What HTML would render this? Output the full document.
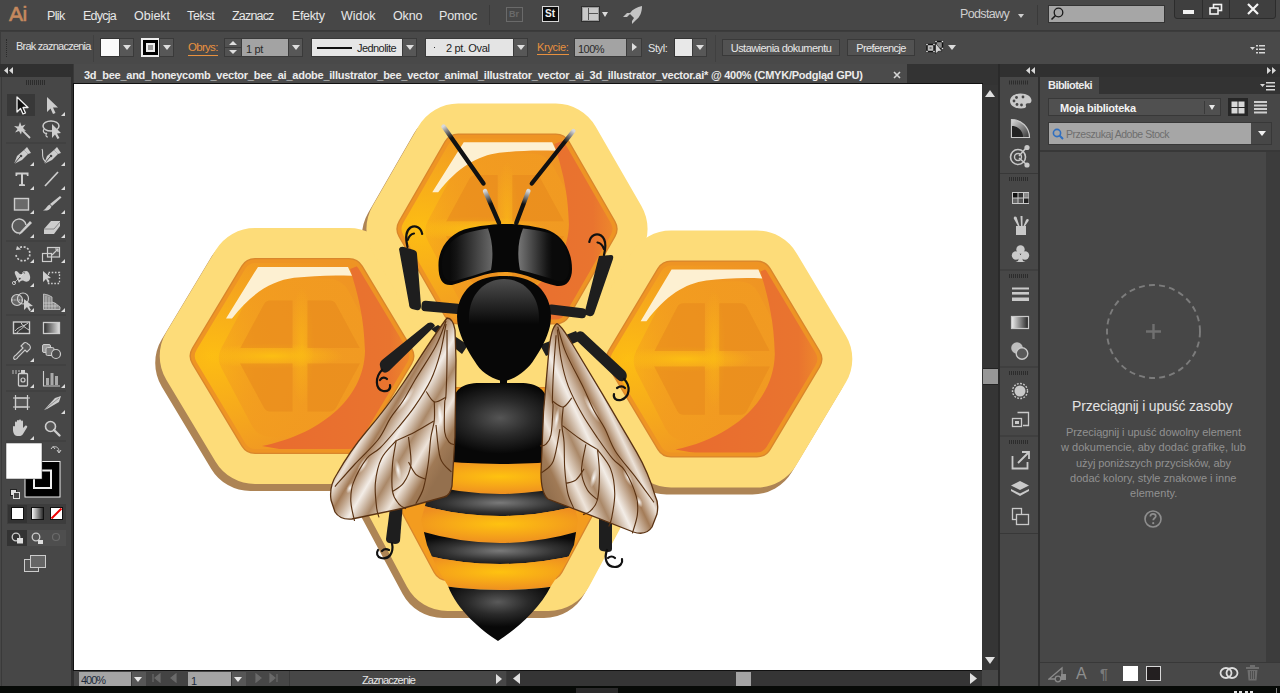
<!DOCTYPE html>
<html><head><meta charset="utf-8">
<style>
*{margin:0;padding:0;box-sizing:border-box}
html,body{width:1280px;height:693px;overflow:hidden;background:#474747;font-family:"Liberation Sans",sans-serif;position:relative}
.a{position:absolute}
.t{position:absolute;white-space:nowrap;line-height:1}
#menubar{left:0;top:0;width:1280px;height:31px;background:#474747;border-bottom:1px solid #393939}
.mi{position:absolute;top:8.5px;font-size:12.5px;color:#e8e8e8;letter-spacing:-0.2px}
#ctrl{left:0;top:31px;width:1280px;height:33px;background:#494949;border-top:1px solid #3c3c3c;border-left:1px solid #3c3c3c}
.ct{position:absolute;font-size:11px;color:#e4e4e4;white-space:nowrap;line-height:1}
.dd{position:absolute;width:15px;height:17px;background:#575757;border:1px solid #3a3a3a}
.dd:after{content:"";position:absolute;left:3px;top:6px;border-left:4px solid transparent;border-right:4px solid transparent;border-top:5px solid #dedede}
.fld{position:absolute;height:17px;background:#a3a3a3;border:1px solid #3a3a3a;font-size:11px;line-height:1;color:#2a2a2a;padding:3px 0 0 3px;white-space:nowrap}
.pbtn{position:absolute;height:17px;background:#525252;border:1px solid #393939;font-size:11px;line-height:1;color:#e8e8e8;text-align:center;padding-top:3px;white-space:nowrap}
</style></head><body>
<!-- MENU BAR -->
<div id="menubar" class="a">
  <div class="t" style="left:9px;top:3px;font-size:21px;color:#c5895e;-webkit-text-stroke:0.6px #c5895e;letter-spacing:-0.6px">Ai</div>
  <div class="mi" style="left:47px;letter-spacing:-0.66px">Plik</div>
  <div class="mi" style="left:83px;letter-spacing:-0.76px">Edycja</div>
  <div class="mi" style="left:134px;letter-spacing:-0.02px">Obiekt</div>
  <div class="mi" style="left:187px;letter-spacing:-0.34px">Tekst</div>
  <div class="mi" style="left:232px;letter-spacing:-0.82px">Zaznacz</div>
  <div class="mi" style="left:292px;letter-spacing:-0.37px">Efekty</div>
  <div class="mi" style="left:341px;letter-spacing:-0.05px">Widok</div>
  <div class="mi" style="left:393px;letter-spacing:-0.10px">Okno</div>
  <div class="mi" style="left:439px;letter-spacing:-0.18px">Pomoc</div>
  <div class="a" style="left:489px;top:5px;width:1px;height:20px;background:#3a3a3a"></div>
  <!-- Br -->
  <div class="a" style="left:506px;top:7px;width:17px;height:15px;border:1px solid #6a6a6a"></div>
  <div class="t" style="left:509px;top:10px;font-size:9px;font-weight:bold;color:#6a6a6a">Br</div>
  <!-- St -->
  <div class="a" style="left:542px;top:6px;width:17px;height:16px;border:1px solid #d8d8d8;background:#0c0c0c"></div>
  <div class="t" style="left:545px;top:9px;font-size:10px;font-weight:bold;color:#f0f0f0">St</div>
  <!-- layout -->
  <div class="a" style="left:581px;top:6px;width:19px;height:16px;border:1px solid #2e2e2e;background:#c8c8c8;box-shadow:inset 0 0 0 1px #9a9a9a"></div>
  <div class="a" style="left:588px;top:8px;width:1px;height:12px;background:#555"></div>
  <div class="a" style="left:589px;top:13px;width:9px;height:1px;background:#555"></div>
  <div class="a" style="left:602px;top:12px;border-left:3.5px solid transparent;border-right:3.5px solid transparent;border-top:5px solid #dcdcdc"></div>
  <!-- rocket -->
  <svg class="a" style="left:622px;top:5px" width="22" height="20" viewBox="0 0 22 20">
    <path d="M20 1 C15 2 11 4 8 8 L5 8 L1 12 L5 12 L8 9 L12 13 L10 16 L10 19 L14 15 C18 12 20 7 20 1Z" fill="#c4c4c4"/>
  </svg>
  <!-- right -->
  <div class="t" style="left:960px;top:8px;font-size:12.5px;color:#cfcfcf;letter-spacing:-0.65px">Podstawy</div>
  <div class="a" style="left:1018px;top:14px;border-left:3.5px solid transparent;border-right:3.5px solid transparent;border-top:4px solid #cfcfcf"></div>
  <div class="a" style="left:1037px;top:5px;width:1px;height:20px;background:#3a3a3a"></div>
  <div class="a" style="left:1048px;top:5px;width:117px;height:18px;background:#a6a6a6;border:1px solid #333"></div>
  <svg class="a" style="left:1050px;top:6px" width="14" height="16" viewBox="0 0 14 16"><circle cx="8.5" cy="6.5" r="4.3" fill="none" stroke="#1a1a1a" stroke-width="1.3"/><path d="M5.5 9.5 L1.5 13.5" stroke="#1a1a1a" stroke-width="1.6"/></svg>
  <!-- window buttons -->
  <div class="a" style="left:1174px;top:-1px;width:102px;height:20px;background:#3f3f3f;border:1px solid #2c2c2c;border-radius:0 0 3px 3px"></div>
  <div class="a" style="left:1202px;top:0;width:1px;height:18px;background:#2c2c2c"></div>
  <div class="a" style="left:1229px;top:0;width:1px;height:18px;background:#2c2c2c"></div>
  <div class="a" style="left:1183px;top:10px;width:11px;height:4px;background:#f2f2f2"></div>
  <svg class="a" style="left:1209px;top:3px" width="14" height="13" viewBox="0 0 14 13"><rect x="4.5" y="1.5" width="8" height="6" fill="none" stroke="#f2f2f2" stroke-width="1.6"/><rect x="1" y="5" width="8" height="6" fill="#3f3f3f" stroke="#f2f2f2" stroke-width="1.6"/></svg>
  <svg class="a" style="left:1246px;top:3px" width="14" height="12" viewBox="0 0 14 12"><path d="M2 1 L12 11 M12 1 L2 11" stroke="#f4f4f4" stroke-width="2.2"/></svg>
</div>
<!-- CONTROL BAR -->
<div id="ctrl" class="a">
  <div class="a" style="left:5px;top:7px;width:1px;height:18px;border-left:1px dotted #2a2a2a"></div>
  <div class="ct" style="left:15px;top:9px;letter-spacing:-0.76px">Brak zaznaczenia</div>
  <div class="a" style="left:92px;top:3px;width:1px;height:27px;background:#404040"></div>
  <div class="a" style="left:99px;top:6px;width:20px;height:19px;background:#fafafa;border:1px solid #333"></div>
  <div class="dd" style="left:118px;top:6px;height:19px"></div>
  <div class="a" style="left:140px;top:6px;width:19px;height:19px;background:#000;border:2px solid #eee"></div>
  <div class="a" style="left:145px;top:11px;width:9px;height:9px;background:#999;border:2px solid #eee"></div>
  <div class="dd" style="left:158px;top:6px;height:19px"></div>
  <div class="ct" style="left:187px;top:10px;color:#e8913f;font-size:11.5px;border-bottom:1px solid #e8913f;padding-bottom:1px;letter-spacing:-0.70px">Obrys:</div>
  <div class="a" style="left:223px;top:6px;width:18px;height:19px;background:#525252;border:1px solid #393939"></div>
  <div class="a" style="left:228px;top:9px;border-left:4px solid transparent;border-right:4px solid transparent;border-bottom:4px solid #dedede"></div>
  <div class="a" style="left:228px;top:18px;border-left:4px solid transparent;border-right:4px solid transparent;border-top:4px solid #dedede"></div>
  <div class="a" style="left:224px;top:15px;width:16px;height:1px;background:#3a3a3a"></div>
  <div class="fld" style="left:240px;top:6px;width:48px;height:19px;padding-top:5px;padding-left:4px;letter-spacing:-0.31px">1 pt</div>
  <div class="dd" style="left:287px;top:6px;height:19px"></div>
  <div class="a" style="left:310px;top:6px;width:92px;height:19px;background:#e6e6e6;border:1px solid #393939"></div>
  <div class="a" style="left:316px;top:15px;width:35px;height:2px;background:#111"></div>
  <div class="ct" style="left:356px;top:11px;color:#1e1e1e;letter-spacing:-0.56px">Jednolite</div>
  <div class="dd" style="left:401px;top:6px;height:19px"></div>
  <div class="a" style="left:424px;top:6px;width:89px;height:19px;background:#e4e4e4;border:1px solid #393939"></div>
  <div class="a" style="left:433px;top:15px;width:1px;height:1px;background:#333"></div>
  <div class="ct" style="left:445px;top:11px;color:#1e1e1e;letter-spacing:-0.36px">2 pt. Oval</div>
  <div class="dd" style="left:512px;top:6px;height:19px"></div>
  <div class="ct" style="left:536px;top:10px;color:#e8913f;font-size:11px;border-bottom:1px solid #e8913f;padding-bottom:1px;letter-spacing:-0.30px">Krycie:</div>
  <div class="fld" style="left:573px;top:6px;width:53px;height:19px;padding-top:5px;padding-left:3px;letter-spacing:-0.54px">100%</div>
  <div class="a" style="left:625px;top:6px;width:16px;height:19px;background:#575757;border:1px solid #3a3a3a"></div>
  <div class="a" style="left:631px;top:11px;border-top:4px solid transparent;border-bottom:4px solid transparent;border-left:5px solid #dedede"></div>
  <div class="ct" style="left:647px;top:11px;letter-spacing:-0.42px">Styl:</div>
  <div class="a" style="left:673px;top:6px;width:19px;height:19px;background:#e8e8e8;border:1px solid #333"></div>
  <div class="dd" style="left:691px;top:6px;height:19px"></div>
  <div class="a" style="left:714px;top:3px;width:1px;height:27px;background:#404040"></div>
  <div class="pbtn" style="left:721px;top:7px;width:118px;height:17px;letter-spacing:-0.54px">Ustawienia dokumentu</div>
  <div class="pbtn" style="left:846px;top:7px;width:68px;height:17px;letter-spacing:-0.61px">Preferencje</div>
  <svg class="a" style="left:924px;top:8px" width="20" height="17" viewBox="924 39 20 17">
    <rect x="926" y="43.5" width="7" height="7" fill="#bdbdbd" stroke="#111" stroke-width="1.4"/>
    <rect x="928.5" y="46" width="2" height="2" fill="#777"/>
    <rect x="935" y="40.5" width="6.5" height="7" fill="#8a8a8a" stroke="#111" stroke-width="1.4"/>
    <g fill="#e6e6e6" stroke="#111" stroke-width="0.5"><circle cx="926" cy="43.5" r="1.1"/><circle cx="933" cy="43.5" r="1.1"/><circle cx="926" cy="50.5" r="1.1"/><circle cx="933" cy="50.5" r="1.1"/><circle cx="935" cy="40.5" r="1.1"/><circle cx="941.5" cy="40.5" r="1.1"/><circle cx="941.5" cy="47.5" r="1.1"/></g>
    <path d="M934.5 42 L934.5 53 L937 50.5 L941 50 Z" fill="#d4d4d4" stroke="#111" stroke-width="0.6"/>
  </svg>
  <div class="a" style="left:947px;top:13px;border-left:4px solid transparent;border-right:4px solid transparent;border-top:5px solid #dcdcdc"></div>
  <svg class="a" style="left:1249px;top:12px" width="16" height="10" viewBox="0 0 16 10">
    <path d="M0 3 L5 3 L2.5 6Z" fill="#d8d8d8"/><rect x="6" y="1" width="2" height="1.5" fill="#d8d8d8"/><rect x="9" y="1" width="6" height="1.5" fill="#d8d8d8"/>
    <rect x="6" y="4.5" width="2" height="1.5" fill="#d8d8d8"/><rect x="9" y="4.5" width="6" height="1.5" fill="#d8d8d8"/>
    <rect x="6" y="8" width="2" height="1.5" fill="#d8d8d8"/><rect x="9" y="8" width="6" height="1.5" fill="#d8d8d8"/>
  </svg>
</div>

<!-- LEFT PANEL HEADER -->
<div class="a" style="left:0;top:64px;width:71px;height:13px;background:#303030"></div>
<svg class="a" style="left:4px;top:67px" width="10" height="7" viewBox="0 0 10 7"><path d="M4 0 L0 3.5 L4 7Z M9 0 L5 3.5 L9 7Z" fill="#d8d8d8"/></svg>
<!-- TOOLBAR -->
<div class="a" id="tools" style="left:1px;top:77px;width:70px;height:609px;background:#474747;border-left:1px solid #3a3a3a"></div>
<div class="a" style="left:71px;top:64px;width:3px;height:622px;background:#303030"></div>
<!-- TOOLBAR SVG --><svg class="a" style="left:0;top:64px" width="72" height="622" viewBox="0 64 72 622">
<defs><linearGradient id="tg" x1="0" y1="0" x2="1" y2="1"><stop offset="0" stop-color="#e8e8e8"/><stop offset="1" stop-color="#9a9a9a"/></linearGradient><linearGradient id="tgr" x1="0" y1="0" x2="1" y2="0"><stop offset="0" stop-color="#2a2a2a"/><stop offset="1" stop-color="#e0e0e0"/></linearGradient><linearGradient id="tgr2" x1="0" y1="0" x2="1" y2="0"><stop offset="0" stop-color="#fff"/><stop offset="1" stop-color="#222"/></linearGradient></defs>
<rect x="26" y="80" width="1" height="5" fill="#2c2c2c"/>
<rect x="28" y="80" width="1" height="5" fill="#2c2c2c"/>
<rect x="30" y="80" width="1" height="5" fill="#2c2c2c"/>
<rect x="32" y="80" width="1" height="5" fill="#2c2c2c"/>
<rect x="34" y="80" width="1" height="5" fill="#2c2c2c"/>
<rect x="36" y="80" width="1" height="5" fill="#2c2c2c"/>
<rect x="38" y="80" width="1" height="5" fill="#2c2c2c"/>
<rect x="40" y="80" width="1" height="5" fill="#2c2c2c"/>
<rect x="42" y="80" width="1" height="5" fill="#2c2c2c"/>
<rect x="44" y="80" width="1" height="5" fill="#2c2c2c"/>
<rect x="7" y="94" width="28" height="22" fill="#383838"/>
<rect x="6" y="142.5" width="60" height="1" fill="#3d3d3d"/>
<rect x="6" y="240.5" width="60" height="1" fill="#3d3d3d"/>
<rect x="6" y="314.5" width="60" height="1" fill="#3d3d3d"/>
<rect x="6" y="364.5" width="60" height="1" fill="#3d3d3d"/>
<rect x="6" y="390.5" width="60" height="1" fill="#3d3d3d"/>
<rect x="6" y="440.5" width="60" height="1" fill="#3d3d3d"/>
<path d="M17 97 L17 112 L20.5 108.5 L23 114 L25.5 113 L23 107.5 L28 107.5 Z" fill="#111" stroke="#f0f0f0" stroke-width="1.3" stroke-linejoin="round"/>
<path d="M47 97 L47 112 L50.5 108.5 L53 114 L55.5 113 L53 107.5 L58 107.5 Z" fill="#cdcdcd"/>
<path d="M65 116 L61 116 L65 112 Z" fill="#dcdcdc"/>
<path d="M20 122 L21.5 126 L25.5 124.5 L23 128 L26 131 L22 130.5 L21 134.5 L19 131 L15 132.5 L17.5 129 L14 126 L18.5 126.5 Z" fill="#cdcdcd"/>
<path d="M21 129 L30 138" stroke="#cdcdcd" stroke-width="1.8"/>
<ellipse cx="51" cy="126" rx="8" ry="5" fill="none" stroke="#cdcdcd" stroke-width="1.5"/>
<path d="M52 124 L52 138 L55 134.5 L57.5 139 L59.5 138 L57 133.5 L61 133 Z" fill="#cdcdcd"/>
<path d="M44 129 C42 132 45 134 47 133 C45 135 46 137 48 137" fill="none" stroke="#cdcdcd" stroke-width="1.1"/>
<path d="M14 164 L17 156 L24 150 L28 154 L22 160 Z" fill="#cdcdcd"/>
<path d="M24 150 L27 147 L31 153 L28 154 Z" fill="#cdcdcd"/>
<path d="M14 164 L20 157" stroke="#474747" stroke-width="1"/>
<circle cx="21" cy="156" r="1.3" fill="#474747"/>
<path d="M34 166 L30 166 L34 162 Z" fill="#dcdcdc"/>
<path d="M44 164 L47 156 L54 150 L58 154 L52 160 Z" fill="#cdcdcd"/>
<path d="M54 150 L57 147 L61 153 L58 154 Z" fill="#cdcdcd"/>
<path d="M44 164 L50 157" stroke="#474747" stroke-width="1"/>
<circle cx="51" cy="156" r="1.3" fill="#474747"/>
<path d="M46 162 C40 158 44 152 42 149" fill="none" stroke="#cdcdcd" stroke-width="1.1"/>
<path d="M65 166 L61 166 L65 162 Z" fill="#dcdcdc"/>
<path d="M15.5 172.5 L28.5 172.5 L28.5 176 L27 176 L26.5 174.5 L23 174.5 L23 184 L25 184.5 L25 186 L19 186 L19 184.5 L21 184 L21 174.5 L17.5 174.5 L17 176 L15.5 176 Z" fill="#cdcdcd"/>
<path d="M34 190 L30 190 L34 186 Z" fill="#dcdcdc"/>
<path d="M45 186 L58 172" stroke="#cdcdcd" stroke-width="1.7"/>
<path d="M65 190 L61 190 L65 186 Z" fill="#dcdcdc"/>
<rect x="14.5" y="198.5" width="14" height="11.5" fill="#6a6a6a" stroke="#cdcdcd" stroke-width="1.4"/>
<path d="M34 214 L30 214 L34 210 Z" fill="#dcdcdc"/>
<path d="M60 196 L61.5 197.5 L52 206 L50 204 Z" fill="#cdcdcd"/><path d="M49.5 204.5 L51.5 206.5 C50 210 47 211 43 210.5 C46 209 47 206 49.5 204.5Z" fill="#cdcdcd"/>
<path d="M65 214 L61 214 L65 210 Z" fill="#dcdcdc"/>
<path d="M20 233 A7 7 0 1 1 26 225" fill="#5a5a5a" stroke="#cdcdcd" stroke-width="1.4"/>
<path d="M30 221 L32 223 L22 233 L19 235 L20 232 Z" fill="#cdcdcd"/>
<path d="M34 238 L30 238 L34 234 Z" fill="#dcdcdc"/>
<path d="M51 221 L60 221 L60 226 L54 234 L44 234 L44 229 Z" fill="#cdcdcd"/><path d="M44 229 L54 229 L60 222" fill="none" stroke="#777" stroke-width="0.8"/>
<path d="M65 238 L61 238 L65 234 Z" fill="#dcdcdc"/>
<path d="M16 255 A7 7 0 1 0 19 248" fill="none" stroke="#cdcdcd" stroke-width="1.7" stroke-dasharray="2 1.6"/>
<path d="M17 246 L21 249.5 L16 250 Z" fill="#cdcdcd"/>
<path d="M34 263 L30 263 L34 259 Z" fill="#dcdcdc"/>
<rect x="47.5" y="247.5" width="12" height="9.5" fill="#555" stroke="#cdcdcd" stroke-width="1.2"/><rect x="42.5" y="253.5" width="9" height="8" fill="none" stroke="#cdcdcd" stroke-width="1.2"/><path d="M52 255 L58 249 M55 249 L58 249 L58 252" fill="none" stroke="#cdcdcd" stroke-width="1.2"/>
<path d="M65 263 L61 263 L65 259 Z" fill="#dcdcdc"/>
<path d="M15 274 C14 271 16 270 18 272 C20 275 22 275 24 272 C26 270 29 271 30 276 C31 280 28 283 24 281 C22 280 20 281 19 283 Z" fill="#cdcdcd"/>
<circle cx="14" cy="283" r="1.6" fill="#474747" stroke="#ddd" stroke-width="0.8"/><circle cx="19.5" cy="278.5" r="1.6" fill="#474747" stroke="#ddd" stroke-width="0.8"/><circle cx="24" cy="273" r="1.3" fill="#474747" stroke="#ddd" stroke-width="0.8"/><path d="M14 283 L24 273" stroke="#eee" stroke-width="0.6"/>
<path d="M34 287 L30 287 L34 283 Z" fill="#dcdcdc"/>
<rect x="48.5" y="272.5" width="11" height="11" fill="none" stroke="#cdcdcd" stroke-width="1.3" stroke-dasharray="1.6 1.6"/>
<path d="M43 271 L43 282 L46 279 L48 283 L49.5 282 L47.5 278.5 L51 278 Z" fill="#cdcdcd"/>
<circle cx="17" cy="300" r="5.5" fill="#666" stroke="#cdcdcd" stroke-width="1.2"/><circle cx="23" cy="298.5" r="5.5" fill="none" stroke="#cdcdcd" stroke-width="1.2"/><path d="M12 300 L22 300" stroke="#cdcdcd" stroke-width="1" stroke-dasharray="1.3 1"/>
<path d="M24 299 L24 310 L27 307 L29.5 311 L31 310 L29 306.5 L33 306 Z" fill="#cdcdcd"/>
<path d="M34 312 L30 312 L34 308 Z" fill="#dcdcdc"/>
<path d="M43.5 294 L43.5 309.5 L60 309.5 L60 307 L55 303 L52 302 L52 297 L48 295 Z" fill="#888" stroke="#cdcdcd" stroke-width="0.8"/><path d="M46 296 V309 M49 297 V309 M43.5 303 H52 M52 302 V309 M55 303 V309 M43.5 306 H58" stroke="#ddd" stroke-width="0.6"/>
<path d="M65 312 L61 312 L65 308 Z" fill="#dcdcdc"/>
<rect x="13.5" y="322" width="16" height="11.5" fill="#3a3a3a" stroke="#cdcdcd" stroke-width="1.4"/><path d="M15 331 C19 326 23 327 28 323 M17 333 C19 329 22 330 25 325 M21 322.5 C22 326 26 328 29 330" fill="none" stroke="#cdcdcd" stroke-width="1"/>
<rect x="43.5" y="322.5" width="16" height="11" fill="url(#tgr)" stroke="#cdcdcd" stroke-width="1.3"/>
<path d="M28 344 C30 345 31 347 30 349 L27 352 L25 350 L18 357 C17 359 15 360 14 359 C13 358 14 356 16 355 L23 348 L21 346 L24 343 C25 342 27 343 28 344Z" fill="#555" stroke="#cdcdcd" stroke-width="1.1"/>
<path d="M34 362 L30 362 L34 358 Z" fill="#dcdcdc"/>
<rect x="42.5" y="344.5" width="8" height="8" rx="1.5" fill="#999" stroke="#cdcdcd" stroke-width="1"/><rect x="46" y="347.5" width="8" height="8" rx="1.5" fill="#777" stroke="#cdcdcd" stroke-width="1"/><circle cx="56" cy="354" r="4.5" fill="#4a4a4a" stroke="#cdcdcd" stroke-width="1.2"/>
<rect x="18.5" y="373.5" width="9" height="12.5" rx="1" fill="none" stroke="#cdcdcd" stroke-width="1.3"/><circle cx="23" cy="380" r="2" fill="none" stroke="#cdcdcd" stroke-width="1.2"/><rect x="21" y="370" width="4" height="3" fill="#cdcdcd"/>
<path d="M12 371 h2 M15 371 h2 M12 373 h2 M15 373 h2 M18 371 h2" stroke="#bbb" stroke-width="1"/>
<path d="M34 388 L30 388 L34 384 Z" fill="#dcdcdc"/>
<path d="M43.5 371 V386 H60" fill="none" stroke="#cdcdcd" stroke-width="1.1"/><rect x="46" y="378" width="3" height="7" fill="#aaa"/><rect x="50.5" y="373" width="3" height="12" fill="#aaa"/><rect x="55" y="376" width="3" height="9" fill="#aaa"/>
<path d="M65 388 L61 388 L65 384 Z" fill="#dcdcdc"/>
<rect x="15.5" y="398" width="12" height="9" fill="#555" stroke="#cdcdcd" stroke-width="1.2"/><path d="M13 398 H30 M13 407 H30 M15.5 395 V410 M27.5 395 V410" stroke="#cdcdcd" stroke-width="1.2"/>
<path d="M44 410 L55 398 L61 396 L59 402 L47 409 Z" fill="#cdcdcd"/><path d="M44 410 L59 398" stroke="#666" stroke-width="0.6"/>
<path d="M65 414 L61 414 L65 410 Z" fill="#dcdcdc"/>
<path d="M15 427 L15 422.5 C15 421 17 421 17 422.5 L17 426 L17 421 C17 419.5 19 419.5 19 421 L19 426 L19 420.5 C19 419 21 419 21 420.5 L21 426 L21 421.5 C21 420 23 420 23 421.5 L23 428 L25 426 C26 425 28 426 27 427.5 L23 434 C22 435.5 21 436 19 436 L17 436 C15 436 13 433 13 430 L13 427 C13 425.5 15 425.5 15 427Z" fill="#cdcdcd"/>
<path d="M34 440 L30 440 L34 436 Z" fill="#dcdcdc"/>
<circle cx="50.5" cy="426.5" r="5" fill="#555" stroke="#cdcdcd" stroke-width="1.6"/><path d="M54 430 L59.5 435.5" stroke="#cdcdcd" stroke-width="2.4" stroke-linecap="round"/>
<rect x="25" y="461.5" width="35" height="35.5" fill="#000" stroke="#eee" stroke-width="1"/>
<rect x="34" y="470.5" width="17" height="17.5" fill="none" stroke="#eee" stroke-width="2"/>
<rect x="6" y="443" width="36" height="36" fill="#fff" stroke="#333" stroke-width="0.5"/>
<path d="M53 447 C57 446 59 448 59 452 M51 449 L53 446.5 L55 449 M57 450 L59 453 L61 450" fill="none" stroke="#ccc" stroke-width="1"/>
<rect x="10.5" y="489.5" width="6" height="6" fill="#ddd" stroke="#222" stroke-width="1"/><rect x="13.5" y="492.5" width="6" height="6" fill="#444" stroke="#ddd" stroke-width="1"/>
<rect x="7" y="504" width="59" height="20" fill="#3d3d3d"/>
<rect x="8" y="505" width="19" height="18" fill="#333"/>
<rect x="11.5" y="507.5" width="12" height="12" fill="#fff" stroke="#111" stroke-width="1"/>
<rect x="31.5" y="507.5" width="12" height="12" fill="url(#tgr2)" stroke="#111" stroke-width="1"/>
<rect x="50.5" y="507.5" width="12" height="12" fill="#fff" stroke="#111" stroke-width="1"/><path d="M51.5 518.5 L61.5 508.5" stroke="#e00" stroke-width="2"/>
<rect x="7" y="530" width="59" height="16" fill="#4e4e4e"/><rect x="7" y="530" width="20" height="16" fill="#333"/>
<circle cx="16" cy="537" r="3.8" fill="none" stroke="#ccc" stroke-width="1.3"/><rect x="17" y="538" width="6" height="5.5" fill="#ddd"/>
<circle cx="36" cy="537" r="3.8" fill="#555" stroke="#ccc" stroke-width="1.3"/><rect x="38" y="540" width="5" height="4" fill="#ddd"/>
<circle cx="56" cy="537" r="3.5" fill="none" stroke="#6a6a6a" stroke-width="1.2"/>
<rect x="24.5" y="559.5" width="14" height="12" fill="#555" stroke="#ccc" stroke-width="1"/><rect x="30.5" y="555.5" width="15" height="12" fill="#666" stroke="#ccc" stroke-width="1"/>
</svg><!-- /TOOLBAR SVG -->
<!-- TAB BAR -->
<div class="a" style="left:74px;top:64px;width:924px;height:21px;background:#333333"></div>
<div class="a" style="left:73px;top:64px;width:834px;height:19px;background:#4b4b4b;border-left:1px solid #393939"></div>
<div class="t" style="left:84px;top:70px;font-size:11px;font-weight:bold;color:#ececec;letter-spacing:-0.25px">3d_bee_and_honeycomb_vector_bee_ai_adobe_illustrator_bee_vector_animal_illustrator_vector_ai_3d_illustrator_vector.ai* @ 400% (CMYK/Podgląd GPU)</div>
<svg class="a" style="left:893px;top:71px" width="8" height="8" viewBox="0 0 8 8"><path d="M1 1 L7 7 M7 1 L1 7" stroke="#d6d6d6" stroke-width="1.6"/></svg>
<div class="a" style="left:73px;top:83px;width:910px;height:1px;background:#111"></div>
<!-- CANVAS -->
<div class="a" id="canvas" style="left:74px;top:84px;width:908px;height:586px;background:#ffffff;overflow:hidden"><!-- ILLUS --><svg class="a" style="left:0;top:0" width="908" height="586" viewBox="74 84 908 586">
<defs>
<radialGradient id="gIn" gradientUnits="objectBoundingBox" cx="0.12" cy="0.5" r="0.9" fx="0.08" fy="0.5">
 <stop offset="0" stop-color="#fdbd13"/><stop offset="0.35" stop-color="#f6a91c"/><stop offset="0.6" stop-color="#f19a22"/><stop offset="1" stop-color="#ee9024"/></radialGradient>
<linearGradient id="gPlate" gradientUnits="objectBoundingBox" x1="0" y1="0" x2="1" y2="0">
 <stop offset="0" stop-color="#f19820" stop-opacity="0.35"/><stop offset="0.25" stop-color="#f29b20" stop-opacity="0.85"/><stop offset="1" stop-color="#f19a22" stop-opacity="1"/></linearGradient>
<radialGradient id="gGlow" gradientUnits="objectBoundingBox" cx="0.5" cy="0.5" r="0.5">
 <stop offset="0" stop-color="#fdc212" stop-opacity="0.9"/><stop offset="1" stop-color="#fdc212" stop-opacity="0"/></radialGradient>
<linearGradient id="gRed" gradientUnits="objectBoundingBox" x1="0" y1="0" x2="1" y2="0">
 <stop offset="0" stop-color="#e96b2f"/><stop offset="0.75" stop-color="#e9742f"/><stop offset="1" stop-color="#f29b28"/></linearGradient>
<linearGradient id="gBand" gradientUnits="objectBoundingBox" x1="0" y1="0" x2="1" y2="0">
 <stop offset="0" stop-color="#fdbf14"/><stop offset="0.6" stop-color="#f5a81f"/><stop offset="1" stop-color="#f09a22"/></linearGradient>
<radialGradient id="gYel" gradientUnits="objectBoundingBox" cx="0.5" cy="0.5" r="0.5">
 <stop offset="0" stop-color="#fec210"/><stop offset="0.5" stop-color="#f7a918"/><stop offset="1" stop-color="#ee8f20"/></radialGradient>
<radialGradient id="gBlk" gradientUnits="objectBoundingBox" cx="0.5" cy="0.6" r="0.5">
 <stop offset="0" stop-color="#7a7a7a"/><stop offset="0.55" stop-color="#333"/><stop offset="1" stop-color="#0a0a0a"/></radialGradient>
<radialGradient id="gBlk0" gradientUnits="userSpaceOnUse" cx="500" cy="418" r="65" gradientTransform="translate(500 418) scale(1 0.55) translate(-500 -418)">
 <stop offset="0" stop-color="#555"/><stop offset="0.5" stop-color="#2a2a2a"/><stop offset="1" stop-color="#070707"/></radialGradient>
<radialGradient id="gTip" gradientUnits="userSpaceOnUse" cx="498" cy="602" r="50" gradientTransform="translate(498 602) scale(1.2 0.5) translate(-498 -602)">
 <stop offset="0" stop-color="#5a5a5a"/><stop offset="0.5" stop-color="#2a2a2a"/><stop offset="1" stop-color="#080808"/></radialGradient>
<radialGradient id="gThx" gradientUnits="userSpaceOnUse" cx="504" cy="300" r="45" gradientTransform="translate(504 300) scale(1 0.55) translate(-504 -300)">
 <stop offset="0" stop-color="#4a4a4a"/><stop offset="0.6" stop-color="#262626"/><stop offset="1" stop-color="#080808"/></radialGradient>
<linearGradient id="gEyeL" gradientUnits="userSpaceOnUse" x1="450" y1="0" x2="494" y2="0">
 <stop offset="0" stop-color="#0a0a0a"/><stop offset="0.15" stop-color="#141414"/><stop offset="1" stop-color="#6c6c6c"/></linearGradient>
<linearGradient id="gEyeR" gradientUnits="userSpaceOnUse" x1="518" y1="0" x2="552" y2="0">
 <stop offset="0" stop-color="#777"/><stop offset="0.85" stop-color="#161616"/><stop offset="1" stop-color="#0a0a0a"/></linearGradient>
<radialGradient id="gAnt" gradientUnits="objectBoundingBox" cx="0.5" cy="0.5" r="0.5">
 <stop offset="0" stop-color="#fff"/><stop offset="1" stop-color="#fff" stop-opacity="0"/></radialGradient>
<linearGradient id="gWingL" gradientUnits="userSpaceOnUse" x1="452.6" y1="266" x2="534.4" y2="314.3">
 <stop offset="0" stop-color="#a88260"/><stop offset="0.1" stop-color="#ece2d8"/><stop offset="0.22" stop-color="#a47c58"/><stop offset="0.4" stop-color="#f3ede7"/><stop offset="0.56" stop-color="#aa8868"/><stop offset="0.72" stop-color="#eee4da"/><stop offset="0.88" stop-color="#a07a56"/><stop offset="1" stop-color="#94704e"/></linearGradient>
<linearGradient id="gWingR" gradientUnits="userSpaceOnUse" x1="257.6" y1="-121.7" x2="348" y2="-164.4">
 <stop offset="0" stop-color="#94704e"/><stop offset="0.12" stop-color="#a07a56"/><stop offset="0.28" stop-color="#eee4da"/><stop offset="0.44" stop-color="#aa8868"/><stop offset="0.6" stop-color="#f3ede7"/><stop offset="0.78" stop-color="#a47c58"/><stop offset="0.9" stop-color="#ece2d8"/><stop offset="1" stop-color="#a88260"/></linearGradient>
<linearGradient id="gDome" gradientUnits="userSpaceOnUse" x1="0" y1="279" x2="0" y2="324">
 <stop offset="0" stop-color="#4e4e4e"/><stop offset="0.45" stop-color="#2e2e2e"/><stop offset="1" stop-color="#070707"/></linearGradient>
<radialGradient id="gShine" gradientUnits="objectBoundingBox" cx="0.5" cy="0.5" r="0.5">
 <stop offset="0" stop-color="#fff" stop-opacity="0.95"/><stop offset="1" stop-color="#fff" stop-opacity="0"/></radialGradient>
</defs>
<path d="M166.3 332.3 L215.6 250.3 A46.0 46.0 0 0 1 255.0 228.0 L349.0 228.0 A46.0 46.0 0 0 1 388.4 250.3 L437.7 332.3 A46.0 46.0 0 0 1 437.7 379.7 L388.4 461.7 A46.0 46.0 0 0 1 349.0 484.0 L255.0 484.0 A46.0 46.0 0 0 1 215.6 461.7 L166.3 379.7 A46.0 46.0 0 0 1 166.3 332.3Z" fill="#ad8455" transform="translate(-4.5,7)"/>
<path d="M372.6 206.0 L418.4 126.5 A46.0 46.0 0 0 1 458.2 103.5 L555.8 103.5 A46.0 46.0 0 0 1 595.6 126.5 L641.4 206.0 A46.0 46.0 0 0 1 641.4 252.0 L595.6 331.5 A46.0 46.0 0 0 1 555.8 354.5 L458.2 354.5 A46.0 46.0 0 0 1 418.4 331.5 L372.6 252.0 A46.0 46.0 0 0 1 372.6 206.0Z" fill="#ad8455" transform="translate(-4.5,7)"/>
<path d="M582.2 335.4 L631.6 252.9 A46.0 46.0 0 0 1 671.1 230.5 L756.9 230.5 A46.0 46.0 0 0 1 796.4 252.9 L845.8 335.4 A46.0 46.0 0 0 1 845.8 382.6 L796.4 465.1 A46.0 46.0 0 0 1 756.9 487.5 L671.1 487.5 A46.0 46.0 0 0 1 631.6 465.1 L582.2 382.6 A46.0 46.0 0 0 1 582.2 335.4Z" fill="#ad8455" transform="translate(-4.5,7)"/>
<path d="M363.6 462.3 L407.0 381.3 A46.0 46.0 0 0 1 447.6 357.0 L548.4 357.0 A46.0 46.0 0 0 1 589.0 381.3 L632.4 462.3 A46.0 46.0 0 0 1 632.4 505.7 L589.0 586.7 A46.0 46.0 0 0 1 548.4 611.0 L447.6 611.0 A46.0 46.0 0 0 1 407.0 586.7 L363.6 505.7 A46.0 46.0 0 0 1 363.6 462.3Z" fill="#ad8455" transform="translate(-4.5,7)"/>
<path d="M166.3 332.3 L215.6 250.3 A46.0 46.0 0 0 1 255.0 228.0 L349.0 228.0 A46.0 46.0 0 0 1 388.4 250.3 L437.7 332.3 A46.0 46.0 0 0 1 437.7 379.7 L388.4 461.7 A46.0 46.0 0 0 1 349.0 484.0 L255.0 484.0 A46.0 46.0 0 0 1 215.6 461.7 L166.3 379.7 A46.0 46.0 0 0 1 166.3 332.3Z" fill="#fddc79"/>
<path d="M372.6 206.0 L418.4 126.5 A46.0 46.0 0 0 1 458.2 103.5 L555.8 103.5 A46.0 46.0 0 0 1 595.6 126.5 L641.4 206.0 A46.0 46.0 0 0 1 641.4 252.0 L595.6 331.5 A46.0 46.0 0 0 1 555.8 354.5 L458.2 354.5 A46.0 46.0 0 0 1 418.4 331.5 L372.6 252.0 A46.0 46.0 0 0 1 372.6 206.0Z" fill="#fddc79"/>
<path d="M582.2 335.4 L631.6 252.9 A46.0 46.0 0 0 1 671.1 230.5 L756.9 230.5 A46.0 46.0 0 0 1 796.4 252.9 L845.8 335.4 A46.0 46.0 0 0 1 845.8 382.6 L796.4 465.1 A46.0 46.0 0 0 1 756.9 487.5 L671.1 487.5 A46.0 46.0 0 0 1 631.6 465.1 L582.2 382.6 A46.0 46.0 0 0 1 582.2 335.4Z" fill="#fddc79"/>
<path d="M363.6 462.3 L407.0 381.3 A46.0 46.0 0 0 1 447.6 357.0 L548.4 357.0 A46.0 46.0 0 0 1 589.0 381.3 L632.4 462.3 A46.0 46.0 0 0 1 632.4 505.7 L589.0 586.7 A46.0 46.0 0 0 1 548.4 611.0 L447.6 611.0 A46.0 46.0 0 0 1 407.0 586.7 L363.6 505.7 A46.0 46.0 0 0 1 363.6 462.3Z" fill="#fddc79"/>
<rect x="420" y="330" width="170" height="45" fill="#fddc79"/>
<clipPath id="clipL"><path d="M196.6 349.8 L245.3 268.8 A12.0 12.0 0 0 1 255.6 263.0 L348.4 263.0 A12.0 12.0 0 0 1 358.7 268.8 L407.4 349.8 A12.0 12.0 0 0 1 407.4 362.2 L358.7 443.2 A12.0 12.0 0 0 1 348.4 449.0 L255.6 449.0 A12.0 12.0 0 0 1 245.3 443.2 L196.6 362.2 A12.0 12.0 0 0 1 196.6 349.8Z"/></clipPath>
<path d="M192.0 347.7 L241.3 265.7 A16.0 16.0 0 0 1 255.0 258.0 L349.0 258.0 A16.0 16.0 0 0 1 362.7 265.7 L412.0 347.7 A16.0 16.0 0 0 1 412.0 364.3 L362.7 446.3 A16.0 16.0 0 0 1 349.0 454.0 L255.0 454.0 A16.0 16.0 0 0 1 241.3 446.3 L192.0 364.3 A16.0 16.0 0 0 1 192.0 347.7Z" fill="#d9862c"/>
<path d="M193.2 348.3 L242.4 266.6 A15.0 15.0 0 0 1 255.2 259.3 L348.8 259.3 A15.0 15.0 0 0 1 361.6 266.6 L410.8 348.3 A15.0 15.0 0 0 1 410.8 363.7 L361.6 445.4 A15.0 15.0 0 0 1 348.8 452.7 L255.2 452.7 A15.0 15.0 0 0 1 242.4 445.4 L193.2 363.7 A15.0 15.0 0 0 1 193.2 348.3Z" fill="#ee9424"/>
<path d="M196.6 349.8 L245.3 268.8 A12.0 12.0 0 0 1 255.6 263.0 L348.4 263.0 A12.0 12.0 0 0 1 358.7 268.8 L407.4 349.8 A12.0 12.0 0 0 1 407.4 362.2 L358.7 443.2 A12.0 12.0 0 0 1 348.4 449.0 L255.6 449.0 A12.0 12.0 0 0 1 245.3 443.2 L196.6 362.2 A12.0 12.0 0 0 1 196.6 349.8Z" fill="url(#gIn)"/>
<g clip-path="url(#clipL)"><g transform="translate(302 356) scale(1.000 0.990)">
<path d="M-80.6 -8.2 L-50.2 -66.2 A22.0 22.0 0 0 1 -30.7 -78.0 L26.7 -78.0 A22.0 22.0 0 0 1 46.2 -66.2 L76.6 -8.2 A22.0 22.0 0 0 1 76.6 12.2 L46.2 70.2 A22.0 22.0 0 0 1 26.7 82.0 L-30.7 82.0 A22.0 22.0 0 0 1 -50.2 70.2 L-80.6 12.2 A22.0 22.0 0 0 1 -80.6 -8.2Z" fill="url(#gPlate)"/>
<ellipse cx="-30" cy="0" rx="72" ry="13" fill="url(#gGlow)"/>
<ellipse cx="0" cy="-10" rx="12" ry="60" fill="url(#gGlow)" opacity="0.55"/>
<path d="M-40 91 C15 80 62 45 63 -5 C62 -40 56 -62 48 -88 L130 -120 L130 120 Z" fill="url(#gRed)"/>
<clipPath id="qL"><rect x="-80" y="-70" width="70.5" height="62"/><rect x="5.5" y="-70" width="80" height="62"/><rect x="-80" y="7.5" width="70.5" height="70"/><rect x="5.5" y="7.5" width="80" height="70"/></clipPath>
<path d="M-64.2 -3.3 L-38.0 -52.3 A7.0 7.0 0 0 1 -31.8 -56.0 L27.8 -56.0 A7.0 7.0 0 0 1 34.0 -52.3 L60.2 -3.3 A7.0 7.0 0 0 1 60.2 3.3 L34.0 52.3 A7.0 7.0 0 0 1 27.8 56.0 L-31.8 56.0 A7.0 7.0 0 0 1 -38.0 52.3 L-64.2 3.3 A7.0 7.0 0 0 1 -64.2 -3.3Z" fill="#e6861c" opacity="0.5" clip-path="url(#qL)"/>
<path d="M-44 -90 L46 -90 L50 -81 C30 -82 10 -81 -8 -79 C-30 -76 -50 -64 -70 -38 L-76 -38 Z" fill="#fdf0d2"/>
</g></g>
<clipPath id="clipC"><path d="M403.2 223.0 L448.4 144.5 A12.0 12.0 0 0 1 458.8 138.5 L555.2 138.5 A12.0 12.0 0 0 1 565.6 144.5 L610.8 223.0 A12.0 12.0 0 0 1 610.8 235.0 L565.6 313.5 A12.0 12.0 0 0 1 555.2 319.5 L458.8 319.5 A12.0 12.0 0 0 1 448.4 313.5 L403.2 235.0 A12.0 12.0 0 0 1 403.2 223.0Z"/></clipPath>
<path d="M398.6 221.0 L444.4 141.5 A16.0 16.0 0 0 1 458.2 133.5 L555.8 133.5 A16.0 16.0 0 0 1 569.6 141.5 L615.4 221.0 A16.0 16.0 0 0 1 615.4 237.0 L569.6 316.5 A16.0 16.0 0 0 1 555.8 324.5 L458.2 324.5 A16.0 16.0 0 0 1 444.4 316.5 L398.6 237.0 A16.0 16.0 0 0 1 398.6 221.0Z" fill="#d9862c"/>
<path d="M399.8 221.5 L445.4 142.3 A15.0 15.0 0 0 1 458.4 134.8 L555.6 134.8 A15.0 15.0 0 0 1 568.6 142.3 L614.2 221.5 A15.0 15.0 0 0 1 614.2 236.5 L568.6 315.7 A15.0 15.0 0 0 1 555.6 323.2 L458.4 323.2 A15.0 15.0 0 0 1 445.4 315.7 L399.8 236.5 A15.0 15.0 0 0 1 399.8 221.5Z" fill="#ee9424"/>
<path d="M403.2 223.0 L448.4 144.5 A12.0 12.0 0 0 1 458.8 138.5 L555.2 138.5 A12.0 12.0 0 0 1 565.6 144.5 L610.8 223.0 A12.0 12.0 0 0 1 610.8 235.0 L565.6 313.5 A12.0 12.0 0 0 1 555.2 319.5 L458.8 319.5 A12.0 12.0 0 0 1 448.4 313.5 L403.2 235.0 A12.0 12.0 0 0 1 403.2 223.0Z" fill="url(#gIn)"/>
<g clip-path="url(#clipC)"><g transform="translate(507 229) scale(0.983 0.965)">
<path d="M-80.6 -8.2 L-50.2 -66.2 A22.0 22.0 0 0 1 -30.7 -78.0 L26.7 -78.0 A22.0 22.0 0 0 1 46.2 -66.2 L76.6 -8.2 A22.0 22.0 0 0 1 76.6 12.2 L46.2 70.2 A22.0 22.0 0 0 1 26.7 82.0 L-30.7 82.0 A22.0 22.0 0 0 1 -50.2 70.2 L-80.6 12.2 A22.0 22.0 0 0 1 -80.6 -8.2Z" fill="url(#gPlate)"/>
<ellipse cx="-30" cy="0" rx="72" ry="13" fill="url(#gGlow)"/>
<ellipse cx="0" cy="-10" rx="12" ry="60" fill="url(#gGlow)" opacity="0.55"/>
<path d="M-40 91 C15 80 62 45 63 -5 C62 -40 56 -62 48 -88 L130 -120 L130 120 Z" fill="url(#gRed)"/>
<clipPath id="qC"><rect x="-80" y="-70" width="70.5" height="62"/><rect x="5.5" y="-70" width="80" height="62"/><rect x="-80" y="7.5" width="70.5" height="70"/><rect x="5.5" y="7.5" width="80" height="70"/></clipPath>
<path d="M-64.2 -3.3 L-38.0 -52.3 A7.0 7.0 0 0 1 -31.8 -56.0 L27.8 -56.0 A7.0 7.0 0 0 1 34.0 -52.3 L60.2 -3.3 A7.0 7.0 0 0 1 60.2 3.3 L34.0 52.3 A7.0 7.0 0 0 1 27.8 56.0 L-31.8 56.0 A7.0 7.0 0 0 1 -38.0 52.3 L-64.2 3.3 A7.0 7.0 0 0 1 -64.2 -3.3Z" fill="#e6861c" opacity="0.5" clip-path="url(#qC)"/>
<path d="M-44 -90 L46 -90 L50 -81 C30 -82 10 -81 -8 -79 C-30 -76 -50 -64 -70 -38 L-76 -38 Z" fill="#fdf0d2"/>
</g></g>
<clipPath id="clipR"><path d="M612.5 352.8 L661.3 271.3 A12.0 12.0 0 0 1 671.6 265.5 L756.4 265.5 A12.0 12.0 0 0 1 766.7 271.3 L815.5 352.8 A12.0 12.0 0 0 1 815.5 365.2 L766.7 446.7 A12.0 12.0 0 0 1 756.4 452.5 L671.6 452.5 A12.0 12.0 0 0 1 661.3 446.7 L612.5 365.2 A12.0 12.0 0 0 1 612.5 352.8Z"/></clipPath>
<path d="M607.9 350.8 L657.3 268.3 A16.0 16.0 0 0 1 671.1 260.5 L756.9 260.5 A16.0 16.0 0 0 1 770.7 268.3 L820.1 350.8 A16.0 16.0 0 0 1 820.1 367.2 L770.7 449.7 A16.0 16.0 0 0 1 756.9 457.5 L671.1 457.5 A16.0 16.0 0 0 1 657.3 449.7 L607.9 367.2 A16.0 16.0 0 0 1 607.9 350.8Z" fill="#d9862c"/>
<path d="M609.1 351.3 L658.4 269.1 A15.0 15.0 0 0 1 671.2 261.8 L756.8 261.8 A15.0 15.0 0 0 1 769.6 269.1 L818.9 351.3 A15.0 15.0 0 0 1 818.9 366.7 L769.6 448.9 A15.0 15.0 0 0 1 756.8 456.2 L671.2 456.2 A15.0 15.0 0 0 1 658.4 448.9 L609.1 366.7 A15.0 15.0 0 0 1 609.1 351.3Z" fill="#ee9424"/>
<path d="M612.5 352.8 L661.3 271.3 A12.0 12.0 0 0 1 671.6 265.5 L756.4 265.5 A12.0 12.0 0 0 1 766.7 271.3 L815.5 352.8 A12.0 12.0 0 0 1 815.5 365.2 L766.7 446.7 A12.0 12.0 0 0 1 756.4 452.5 L671.6 452.5 A12.0 12.0 0 0 1 661.3 446.7 L612.5 365.2 A12.0 12.0 0 0 1 612.5 352.8Z" fill="url(#gIn)"/>
<g clip-path="url(#clipR)"><g transform="translate(714 359) scale(0.965 0.995)">
<path d="M-80.6 -8.2 L-50.2 -66.2 A22.0 22.0 0 0 1 -30.7 -78.0 L26.7 -78.0 A22.0 22.0 0 0 1 46.2 -66.2 L76.6 -8.2 A22.0 22.0 0 0 1 76.6 12.2 L46.2 70.2 A22.0 22.0 0 0 1 26.7 82.0 L-30.7 82.0 A22.0 22.0 0 0 1 -50.2 70.2 L-80.6 12.2 A22.0 22.0 0 0 1 -80.6 -8.2Z" fill="url(#gPlate)"/>
<ellipse cx="-30" cy="0" rx="72" ry="13" fill="url(#gGlow)"/>
<ellipse cx="0" cy="-10" rx="12" ry="60" fill="url(#gGlow)" opacity="0.55"/>
<path d="M-40 91 C15 80 62 45 63 -5 C62 -40 56 -62 48 -88 L130 -120 L130 120 Z" fill="url(#gRed)"/>
<clipPath id="qR"><rect x="-80" y="-70" width="70.5" height="62"/><rect x="5.5" y="-70" width="80" height="62"/><rect x="-80" y="7.5" width="70.5" height="70"/><rect x="5.5" y="7.5" width="80" height="70"/></clipPath>
<path d="M-64.2 -3.3 L-38.0 -52.3 A7.0 7.0 0 0 1 -31.8 -56.0 L27.8 -56.0 A7.0 7.0 0 0 1 34.0 -52.3 L60.2 -3.3 A7.0 7.0 0 0 1 60.2 3.3 L34.0 52.3 A7.0 7.0 0 0 1 27.8 56.0 L-31.8 56.0 A7.0 7.0 0 0 1 -38.0 52.3 L-64.2 3.3 A7.0 7.0 0 0 1 -64.2 -3.3Z" fill="#e6861c" opacity="0.5" clip-path="url(#qR)"/>
<path d="M-44 -90 L46 -90 L50 -81 C30 -82 10 -81 -8 -79 C-30 -76 -50 -64 -70 -38 L-76 -38 Z" fill="#fdf0d2"/>
</g></g>
<path d="M390.1 476.4 L433.5 395.4 A16.0 16.0 0 0 1 447.6 387.0 L548.4 387.0 A16.0 16.0 0 0 1 562.5 395.4 L605.9 476.4 A16.0 16.0 0 0 1 605.9 491.6 L562.5 572.6 A16.0 16.0 0 0 1 548.4 581.0 L447.6 581.0 A16.0 16.0 0 0 1 433.5 572.6 L390.1 491.6 A16.0 16.0 0 0 1 390.1 476.4Z" fill="#d9862c"/>
<path d="M391.3 476.9 L434.5 396.2 A15.0 15.0 0 0 1 447.8 388.3 L548.2 388.3 A15.0 15.0 0 0 1 561.5 396.2 L604.7 476.9 A15.0 15.0 0 0 1 604.7 491.1 L561.5 571.8 A15.0 15.0 0 0 1 548.2 579.7 L447.8 579.7 A15.0 15.0 0 0 1 434.5 571.8 L391.3 491.1 A15.0 15.0 0 0 1 391.3 476.9Z" fill="#f39c1f"/>
<g fill="#1e1e1e">
<path d="M399 249 Q400 246 404 247 L414 250 Q417 251 417 254 L421 306 Q421 311 416 310 L412 309 Q409 308 409 304 Z"/>
<rect x="422" y="300.5" width="40" height="10.5" rx="4" transform="rotate(5 422 300)"/>
<path d="M428 323 Q433 321 435 326 L389 371 Q384 375 381 370 L380 366 Q379 363 382 360 Z"/>
<path d="M431 329 L438 325 L468 345 L462 354 Z"/>
<path d="M599 256 L611 255 Q614 255 613 259 L594 314 Q592 317 589 316 L586 315 Q584 314 585 311 Z"/>
<rect x="548" y="304" width="39" height="10" rx="4" transform="rotate(7 548 304)"/>
<path d="M576 334 Q578 330 583 332 L625 371 Q628 375 626 379 L623 381 Q620 382 617 379 L577 341 Q575 338 576 334 Z"/>
<path d="M540 345 L576 331 L581 340 L546 356 Z"/>
<path d="M391 500 L403 502 L400 541 Q399 544 395 544 L389 543 Q386 542 386 539 Z"/>
<path d="M599 512 L612 515 L612 549 Q612 552 608 552 L602 551 Q599 550 599 547 Z"/>
</g>
<g fill="none" stroke="#111" stroke-width="2.2" stroke-linecap="round">
<path d="M407.5 247 C405.5 239 405.5 231 410.5 227.5 C415.5 224.5 421 227.5 422.2 234"/><path d="M407.7 240 C409 236 411 234 414 233.5"/>
<path d="M604 255 C606 247 606 239 601 235.5 C596 232.5 590.5 235.5 589.3 242"/><path d="M604 249 C602.5 245 600.5 243 597.5 242.5"/>
<path d="M382 370 C375 377 375 389 383 391 C388 392 391 389 390 385"/><path d="M380 380 C382 377 385 377 387 379"/>
<path d="M624 379 C631 386 630 397 621 400 C616 401 613 398 614 394"/><path d="M625 388 C623 386 620 386 617 388"/>
<path d="M392 543 C394 553 389 560 381 558 C377 557 376 553 378 550"/><path d="M389 550 C387 549 384 549 382 551"/>
<path d="M607 550 C604 558 606 567 615 567 C620 567 623 563 622 559"/><path d="M608 558 C610 556 613 556 615 558"/>
</g>
<linearGradient id="ga0" gradientUnits="userSpaceOnUse" x1="443.5" y1="126.5" x2="451.5" y2="138.0"><stop offset="0" stop-color="#d8d8d8"/><stop offset="0.3" stop-color="#9a9a9a"/><stop offset="1" stop-color="#111"/></linearGradient>
<path d="M443.5 126.5 L483.5 183.5" stroke="url(#ga0)" stroke-width="4.4" stroke-linecap="round" fill="none"/>
<linearGradient id="ga1" gradientUnits="userSpaceOnUse" x1="485.0" y1="191.0" x2="490.6" y2="203.8"><stop offset="0" stop-color="#d8d8d8"/><stop offset="0.3" stop-color="#9a9a9a"/><stop offset="1" stop-color="#111"/></linearGradient>
<path d="M485.0 191.0 L499.0 223.0" stroke="url(#ga1)" stroke-width="4.4" stroke-linecap="round" fill="none"/>
<linearGradient id="ga2" gradientUnits="userSpaceOnUse" x1="573.4" y1="131.0" x2="564.7" y2="142.0"><stop offset="0" stop-color="#d8d8d8"/><stop offset="0.3" stop-color="#9a9a9a"/><stop offset="1" stop-color="#111"/></linearGradient>
<path d="M573.4 131.0 L531.8 183.5" stroke="url(#ga2)" stroke-width="4.4" stroke-linecap="round" fill="none"/>
<linearGradient id="ga3" gradientUnits="userSpaceOnUse" x1="528.4" y1="191.0" x2="523.4" y2="204.1"><stop offset="0" stop-color="#d8d8d8"/><stop offset="0.3" stop-color="#9a9a9a"/><stop offset="1" stop-color="#111"/></linearGradient>
<path d="M528.4 191.0 L516.3 223.0" stroke="url(#ga3)" stroke-width="4.4" stroke-linecap="round" fill="none"/>
<clipPath id="abd"><path d="M453 405 C453 390 462 383 480 383 L520 383 C538 383 547 390 548 405 L570 488 L578 520 L574 545 L564 566 L551 586 C539 610 515 630 498 641 C481 630 457 610 448 586 L436 566 L427 545 L421 520 L430 488 Z"/></clipPath>
<g clip-path="url(#abd)">
<rect x="400" y="380" width="200" height="90" fill="url(#gBlk0)"/>
<path d="M420 459.0 Q500 469.0 580 459.0 L600 459.0 L600 483.0 L580 483.0 Q500 505.0 420 483.0 L400 483.0 L400 459.0 Z" fill="url(#gYel)"/>
<path d="M420 483.0 Q500 505.0 580 483.0 L600 483.0 L600 505.0 L580 505.0 Q500 527.0 420 505.0 L400 505.0 L400 483.0 Z" fill="url(#gBlk)"/>
<path d="M420 505.0 Q500 527.0 580 505.0 L600 505.0 L600 531.0 L580 531.0 Q500 555.0 420 531.0 L400 531.0 L400 505.0 Z" fill="url(#gYel)"/>
<path d="M420 531.0 Q500 555.0 580 531.0 L600 531.0 L600 554.0 L580 554.0 Q500 574.0 420 554.0 L400 554.0 L400 531.0 Z" fill="url(#gBlk)"/>
<path d="M420 554.0 Q500 574.0 580 554.0 L600 554.0 L600 582.0 L580 582.0 Q500 598.0 420 582.0 L400 582.0 L400 554.0 Z" fill="url(#gYel)"/>
<path d="M420 582.0 Q500 598.0 580 582.0 L600 582.0 L600 660.0 L580 660.0 Q500 660.0 420 660.0 L400 660.0 L400 582.0 Z" fill="url(#gTip)"/>
</g>
<g transform="translate(0 0)">
<path d="M447 318 Q453 318 455 330 L456 360 L455 437 L452 486 Q450 496 444 497 L404 508 L352 519 Q340 520 335 512 L331 500 Q329 486 337 474 C345 460 355 445 366 432 C378 418 392 400 404 382 C420 358 432 338 447 318 Z" fill="url(#gWingL)" stroke="#5a3212" stroke-width="1.3"/>
<ellipse cx="405" cy="400" rx="16" ry="3.5" transform="rotate(-55 405 400)" fill="url(#gShine)"/>
<ellipse cx="363" cy="465" rx="10" ry="3.5" transform="rotate(-58 363 465)" fill="url(#gShine)"/>
<ellipse cx="440" cy="415" rx="2.5" ry="12" transform="rotate(-5 440 415)" fill="url(#gShine)"/>
<ellipse cx="398" cy="470" rx="3" ry="10" transform="rotate(-10 398 470)" fill="url(#gShine)"/>
<ellipse cx="350" cy="488" rx="6" ry="3" transform="rotate(-60 350 488)" fill="url(#gShine)"/>
<g fill="none" stroke="#5a3212" stroke-width="1.15">
<path d="M446.0 321.0 C444.3 325.2 440.8 336.7 435.6 346.5 C430.4 356.3 420.4 370.9 415.0 380.0 C409.6 389.1 407.2 394.4 403.1 400.8 C399.0 407.2 394.6 411.6 390.4 418.1 C386.2 424.6 383.8 432.3 377.8 440.0 C371.8 447.7 361.6 456.7 354.5 464.5 C347.4 472.3 338.2 482.9 334.9 486.6"/>
<path d="M446.0 324.0 C445.1 328.8 442.8 343.6 440.3 352.9 C437.8 362.2 435.1 371.1 430.8 380.0 C426.5 388.9 420.2 398.5 414.6 406.6 C409.0 414.7 403.1 421.6 397.3 428.5 C391.5 435.4 385.1 443.0 380.0 448.0 C374.9 453.0 371.2 452.6 366.8 458.4 C362.4 464.2 356.0 475.8 353.3 482.9 C350.6 490.0 350.6 494.9 350.8 501.3 C351.0 507.7 353.9 517.7 354.5 521.0"/>
<path d="M447.0 330.0 C447.0 335.0 447.1 352.2 447.0 360.0 C446.9 367.8 446.9 370.5 446.7 376.7 C446.5 382.9 446.1 392.9 445.8 397.3 C445.5 401.7 444.9 397.3 444.7 403.1 C444.5 408.9 443.9 425.4 444.7 432.0 C445.5 438.6 447.6 440.3 449.3 442.4 C451.0 444.5 454.1 444.3 455.0 444.7"/>
<path d="M426.2 391.5 C427.6 393.2 431.0 400.9 434.3 401.9 C437.6 402.9 443.9 398.1 445.8 397.3"/>
<path d="M434.3 401.9 C434.3 405.0 434.9 414.4 434.3 420.4 C433.7 426.4 431.8 430.3 430.8 437.7 C429.8 445.1 429.4 455.9 428.1 464.5 C426.8 473.1 425.2 482.4 423.2 489.0 C421.1 495.6 417.0 501.3 415.8 503.8"/>
<path d="M433.7 421.0 C430.6 422.8 421.2 428.7 415.0 432.0 C408.8 435.3 399.3 439.2 396.2 440.6"/>
<path d="M396.2 440.6 C395.6 444.6 393.1 456.0 392.5 464.5 C391.9 473.0 391.5 484.9 392.5 491.5 C393.5 498.1 396.4 500.9 398.7 503.8 C400.9 506.7 404.8 507.9 406.0 508.7"/>
<path d="M408.5 437.0 C408.9 441.6 411.7 456.9 410.9 464.5 C410.1 472.1 406.7 478.4 403.6 482.9 C400.5 487.4 394.4 490.1 392.5 491.5"/>
<path d="M396.2 440.6 C393.8 443.6 385.0 451.3 381.5 458.4 C378.0 465.4 376.2 474.7 375.4 482.9 C374.6 491.1 376.0 501.8 376.6 507.5 C377.2 513.2 378.6 515.7 379.0 517.3"/>
<path d="M408.5 462.0 C409.7 464.1 412.9 471.4 415.8 474.3 C418.7 477.2 424.1 478.4 425.7 479.2"/>
<path d="M436.0 425.0 C436.7 430.6 437.8 450.6 440.4 458.4 C443.0 466.2 449.6 469.6 451.4 471.9"/>
</g></g>
<path d="M557 323.6 C552 326 550 338 548.6 354 L543.5 411.7 L541 472.7 Q541 493 548 499 L585.8 513.4 L633.3 532 Q646 536 652 527 L657 514 Q659 503 655.3 496.4 C650 478 644 465 636.7 452.4 C625 432 614 414 602.8 394.7 C592 377 582 360 572.3 344 C566 334 562 326 557 323.6 Z" fill="url(#gWingR)" stroke="#5a3212" stroke-width="1.3"/>
<g transform="matrix(-0.974 -0.1304 -0.0725 0.9736 1015.4 72.3)">
<ellipse cx="405" cy="400" rx="16" ry="3.5" transform="rotate(-55 405 400)" fill="url(#gShine)"/>
<ellipse cx="363" cy="465" rx="10" ry="3.5" transform="rotate(-58 363 465)" fill="url(#gShine)"/>
<ellipse cx="440" cy="415" rx="2.5" ry="12" transform="rotate(-5 440 415)" fill="url(#gShine)"/>
<ellipse cx="398" cy="470" rx="3" ry="10" transform="rotate(-10 398 470)" fill="url(#gShine)"/>
<ellipse cx="350" cy="488" rx="6" ry="3" transform="rotate(-60 350 488)" fill="url(#gShine)"/>
<g fill="none" stroke="#5a3212" stroke-width="1.15">
<path d="M446.0 321.0 C444.3 325.2 440.8 336.7 435.6 346.5 C430.4 356.3 420.4 370.9 415.0 380.0 C409.6 389.1 407.2 394.4 403.1 400.8 C399.0 407.2 394.6 411.6 390.4 418.1 C386.2 424.6 383.8 432.3 377.8 440.0 C371.8 447.7 361.6 456.7 354.5 464.5 C347.4 472.3 338.2 482.9 334.9 486.6"/>
<path d="M446.0 324.0 C445.1 328.8 442.8 343.6 440.3 352.9 C437.8 362.2 435.1 371.1 430.8 380.0 C426.5 388.9 420.2 398.5 414.6 406.6 C409.0 414.7 403.1 421.6 397.3 428.5 C391.5 435.4 385.1 443.0 380.0 448.0 C374.9 453.0 371.2 452.6 366.8 458.4 C362.4 464.2 356.0 475.8 353.3 482.9 C350.6 490.0 350.6 494.9 350.8 501.3 C351.0 507.7 353.9 517.7 354.5 521.0"/>
<path d="M447.0 330.0 C447.0 335.0 447.1 352.2 447.0 360.0 C446.9 367.8 446.9 370.5 446.7 376.7 C446.5 382.9 446.1 392.9 445.8 397.3 C445.5 401.7 444.9 397.3 444.7 403.1 C444.5 408.9 443.9 425.4 444.7 432.0 C445.5 438.6 447.6 440.3 449.3 442.4 C451.0 444.5 454.1 444.3 455.0 444.7"/>
<path d="M426.2 391.5 C427.6 393.2 431.0 400.9 434.3 401.9 C437.6 402.9 443.9 398.1 445.8 397.3"/>
<path d="M434.3 401.9 C434.3 405.0 434.9 414.4 434.3 420.4 C433.7 426.4 431.8 430.3 430.8 437.7 C429.8 445.1 429.4 455.9 428.1 464.5 C426.8 473.1 425.2 482.4 423.2 489.0 C421.1 495.6 417.0 501.3 415.8 503.8"/>
<path d="M433.7 421.0 C430.6 422.8 421.2 428.7 415.0 432.0 C408.8 435.3 399.3 439.2 396.2 440.6"/>
<path d="M396.2 440.6 C395.6 444.6 393.1 456.0 392.5 464.5 C391.9 473.0 391.5 484.9 392.5 491.5 C393.5 498.1 396.4 500.9 398.7 503.8 C400.9 506.7 404.8 507.9 406.0 508.7"/>
<path d="M408.5 437.0 C408.9 441.6 411.7 456.9 410.9 464.5 C410.1 472.1 406.7 478.4 403.6 482.9 C400.5 487.4 394.4 490.1 392.5 491.5"/>
<path d="M396.2 440.6 C393.8 443.6 385.0 451.3 381.5 458.4 C378.0 465.4 376.2 474.7 375.4 482.9 C374.6 491.1 376.0 501.8 376.6 507.5 C377.2 513.2 378.6 515.7 379.0 517.3"/>
<path d="M408.5 462.0 C409.7 464.1 412.9 471.4 415.8 474.3 C418.7 477.2 424.1 478.4 425.7 479.2"/>
<path d="M436.0 425.0 C436.7 430.6 437.8 450.6 440.4 458.4 C443.0 466.2 449.6 469.6 451.4 471.9"/>
</g></g>
<path d="M500 383.5 L500 380.5 C490 378 480 371 474.5 361 C468 351 461 339 458 326 C455 311 459 296 470 286 C480 278 492 276 504 276 C516 276 528 278 538 286 C549 296 553 311 550 326 C547 339 540 351 532.5 362 C526 371 516 378 507 380.5 L507 383.5 Z" fill="#070707"/>
<path d="M469 318 C469 294 485 279 504 279 C523 279 539 294 539 318 L539 325 L469 325 Z" fill="url(#gDome)"/>
<path d="M438.5 266 C438 248 450 232 470 228 C485 225 495 224 505 224 C515 224 528 225 545 229 C562 234 572 250 572 269 C572 281 566 287 557 286 C540 283 525 272 505 272 C485 272 470 280 452 285 C443 286 438.5 280 438.5 266 Z" fill="#070707"/>
<path d="M442 265 C442 250 452 236 470 232 C478 230 484 229 488 228.5 C492 240 494 252 491 270 C478 274 466 278 454 281 C446 282 442 276 442 265 Z" fill="url(#gEyeL)"/>
<path d="M523 228.5 C540 230 550 233 556 236 C566 244 569 256 569 268 C569 277 565 282 558 281 C546 277 533 273 520 270 C517 255 518 240 523 228.5 Z" fill="url(#gEyeR)"/>
</svg><!-- /ILLUS --></div>
<div class="a" style="left:73px;top:83px;width:1px;height:588px;background:#111"></div>
<div class="a" style="left:74px;top:670px;width:909px;height:1px;background:#111"></div>
<!-- V SCROLLBAR -->
<div class="a" style="left:982px;top:85px;width:16px;height:585px;background:#353535"></div>
<div class="a" style="left:985px;top:90px;border-left:5.5px solid transparent;border-right:5.5px solid transparent;border-bottom:7px solid #e0e0e0"></div>
<div class="a" style="left:983px;top:368px;width:15px;height:1px;background:#222"></div><div class="a" style="left:983px;top:369px;width:15px;height:15px;background:#979797"></div><div class="a" style="left:983px;top:384px;width:15px;height:1px;background:#222"></div>
<div class="a" style="left:985px;top:657px;border-left:5.5px solid transparent;border-right:5.5px solid transparent;border-top:7px solid #e0e0e0"></div>
<div class="a" style="left:982px;top:670px;width:16px;height:16px;background:#474747"></div>
<div class="a" style="left:998px;top:64px;width:2px;height:622px;background:#2a2a2a"></div>
<!-- STATUS BAR -->
<div class="a" style="left:74px;top:671px;width:908px;height:15px;background:#474747"></div>
<div class="a" style="left:79px;top:672px;width:52px;height:14px;background:#a4a4a4"></div>
<div class="t" style="left:81px;top:675px;font-size:11px;color:#1e2a3a;letter-spacing:-1.04px">400%</div>
<div class="a" style="left:131px;top:672px;width:15px;height:14px;background:#575757;border-left:1px solid #3a3a3a"></div>
<div class="a" style="left:134px;top:677px;border-left:4px solid transparent;border-right:4px solid transparent;border-top:5px solid #e8e8e8"></div>
<div class="a" style="left:146px;top:671px;width:42px;height:15px;background:#434343"></div>
<svg class="a" style="left:152px;top:673px" width="30" height="10" viewBox="0 0 30 10"><path d="M1 1 V9 M8 1 L3 5 L8 9Z M24 1 L19 5 L24 9Z" stroke="#6a6a6a" fill="#6a6a6a" stroke-width="1.2"/></svg>
<div class="a" style="left:188px;top:672px;width:43px;height:14px;background:#a4a4a4"></div>
<div class="t" style="left:191px;top:676px;font-size:11px;color:#1e2a3a">1</div>
<div class="a" style="left:231px;top:672px;width:15px;height:14px;background:#575757;border-left:1px solid #3a3a3a"></div>
<div class="a" style="left:234px;top:677px;border-left:4px solid transparent;border-right:4px solid transparent;border-top:5px solid #e8e8e8"></div>
<svg class="a" style="left:254px;top:673px" width="30" height="10" viewBox="0 0 30 10"><path d="M2 1 L7 5 L2 9Z M16 1 L21 5 L16 9Z M23 1 V9" stroke="#6a6a6a" fill="#6a6a6a" stroke-width="1.2"/></svg>
<div class="a" style="left:289px;top:671px;width:1px;height:15px;background:#3a3a3a"></div>
<div class="t" style="left:362px;top:675px;font-size:11px;color:#e8e8e8;letter-spacing:-0.85px">Zaznaczenie</div>
<svg class="a" style="left:496px;top:674px" width="6" height="10" viewBox="0 0 6 10"><path d="M0 0 L6 5 L0 10Z" fill="#e0e0e0"/></svg>
<div class="a" style="left:506px;top:671px;width:1px;height:15px;background:#3a3a3a"></div>
<!-- H SCROLLBAR -->
<div class="a" style="left:507px;top:671px;width:475px;height:15px;background:#353535"></div>
<svg class="a" style="left:513px;top:673px" width="7" height="11" viewBox="0 0 7 11"><path d="M7 0 L0 5.5 L7 11Z" fill="#e0e0e0"/></svg>
<div class="a" style="left:736px;top:672px;width:15px;height:14px;background:#a4a4a4"></div>
<svg class="a" style="left:970px;top:673px" width="7" height="11" viewBox="0 0 7 11"><path d="M0 0 L7 5.5 L0 11Z" fill="#e0e0e0"/></svg>
<!-- TASKBAR -->
<div class="a" style="left:0;top:686px;width:1280px;height:7px;background:#070a07"></div>
<div class="a" style="left:576px;top:688px;width:42px;height:5px;background:#2a2a2a"></div><div class="a" style="left:1234px;top:691px;width:3px;height:2px;background:#ddd"></div><div class="a" style="left:1239px;top:691px;width:3px;height:2px;background:#ddd"></div><div class="a" style="left:1245px;top:691px;width:3px;height:2px;background:#ddd"></div><div class="a" style="left:1250px;top:691px;width:3px;height:2px;background:#ddd"></div><div class="a" style="left:1276px;top:688px;width:1px;height:5px;background:#888"></div>
<!-- RIGHT ICON STRIP -->
<div class="a" style="left:1000px;top:64px;width:280px;height:13px;background:#303030"></div>
<svg class="a" style="left:1026px;top:67px" width="10" height="7" viewBox="0 0 10 7"><path d="M4 0 L0 3.5 L4 7Z M9 0 L5 3.5 L9 7Z" fill="#d8d8d8"/></svg>
<svg class="a" style="left:1266px;top:67px" width="10" height="7" viewBox="0 0 10 7"><path d="M1 0 L5 3.5 L1 7Z M6 0 L10 3.5 L6 7Z" fill="#d8d8d8"/></svg>
<div class="a" id="strip" style="left:1000px;top:77px;width:38px;height:609px;background:#474747"></div>
<!-- STRIP SVG --><svg class="a" style="left:1000px;top:77px" width="38" height="609" viewBox="1000 77 38 609">
<defs><linearGradient id="sg" x1="0" y1="0" x2="1" y2="0"><stop offset="0" stop-color="#f0f0f0"/><stop offset="1" stop-color="#222"/></linearGradient><linearGradient id="sg2" x1="0" y1="0" x2="1" y2="1"><stop offset="0" stop-color="#ddd"/><stop offset="1" stop-color="#333"/></linearGradient></defs>
<rect x="1000" y="173" width="38" height="1" fill="#383838"/>
<rect x="1000" y="269.5" width="38" height="1" fill="#383838"/>
<rect x="1000" y="366.5" width="38" height="1" fill="#383838"/>
<rect x="1000" y="435.5" width="38" height="1" fill="#383838"/>
<rect x="1000" y="533" width="38" height="1" fill="#383838"/>
<rect x="1009" y="80.5" width="1" height="4" fill="#2c2c2c"/>
<rect x="1011" y="80.5" width="1" height="4" fill="#2c2c2c"/>
<rect x="1013" y="80.5" width="1" height="4" fill="#2c2c2c"/>
<rect x="1015" y="80.5" width="1" height="4" fill="#2c2c2c"/>
<rect x="1017" y="80.5" width="1" height="4" fill="#2c2c2c"/>
<rect x="1019" y="80.5" width="1" height="4" fill="#2c2c2c"/>
<rect x="1021" y="80.5" width="1" height="4" fill="#2c2c2c"/>
<rect x="1023" y="80.5" width="1" height="4" fill="#2c2c2c"/>
<rect x="1025" y="80.5" width="1" height="4" fill="#2c2c2c"/>
<rect x="1027" y="80.5" width="1" height="4" fill="#2c2c2c"/>
<rect x="1009" y="177" width="1" height="4" fill="#2c2c2c"/>
<rect x="1011" y="177" width="1" height="4" fill="#2c2c2c"/>
<rect x="1013" y="177" width="1" height="4" fill="#2c2c2c"/>
<rect x="1015" y="177" width="1" height="4" fill="#2c2c2c"/>
<rect x="1017" y="177" width="1" height="4" fill="#2c2c2c"/>
<rect x="1019" y="177" width="1" height="4" fill="#2c2c2c"/>
<rect x="1021" y="177" width="1" height="4" fill="#2c2c2c"/>
<rect x="1023" y="177" width="1" height="4" fill="#2c2c2c"/>
<rect x="1025" y="177" width="1" height="4" fill="#2c2c2c"/>
<rect x="1027" y="177" width="1" height="4" fill="#2c2c2c"/>
<rect x="1009" y="274" width="1" height="4" fill="#2c2c2c"/>
<rect x="1011" y="274" width="1" height="4" fill="#2c2c2c"/>
<rect x="1013" y="274" width="1" height="4" fill="#2c2c2c"/>
<rect x="1015" y="274" width="1" height="4" fill="#2c2c2c"/>
<rect x="1017" y="274" width="1" height="4" fill="#2c2c2c"/>
<rect x="1019" y="274" width="1" height="4" fill="#2c2c2c"/>
<rect x="1021" y="274" width="1" height="4" fill="#2c2c2c"/>
<rect x="1023" y="274" width="1" height="4" fill="#2c2c2c"/>
<rect x="1025" y="274" width="1" height="4" fill="#2c2c2c"/>
<rect x="1027" y="274" width="1" height="4" fill="#2c2c2c"/>
<rect x="1009" y="371" width="1" height="4" fill="#2c2c2c"/>
<rect x="1011" y="371" width="1" height="4" fill="#2c2c2c"/>
<rect x="1013" y="371" width="1" height="4" fill="#2c2c2c"/>
<rect x="1015" y="371" width="1" height="4" fill="#2c2c2c"/>
<rect x="1017" y="371" width="1" height="4" fill="#2c2c2c"/>
<rect x="1019" y="371" width="1" height="4" fill="#2c2c2c"/>
<rect x="1021" y="371" width="1" height="4" fill="#2c2c2c"/>
<rect x="1023" y="371" width="1" height="4" fill="#2c2c2c"/>
<rect x="1025" y="371" width="1" height="4" fill="#2c2c2c"/>
<rect x="1027" y="371" width="1" height="4" fill="#2c2c2c"/>
<rect x="1009" y="440" width="1" height="4" fill="#2c2c2c"/>
<rect x="1011" y="440" width="1" height="4" fill="#2c2c2c"/>
<rect x="1013" y="440" width="1" height="4" fill="#2c2c2c"/>
<rect x="1015" y="440" width="1" height="4" fill="#2c2c2c"/>
<rect x="1017" y="440" width="1" height="4" fill="#2c2c2c"/>
<rect x="1019" y="440" width="1" height="4" fill="#2c2c2c"/>
<rect x="1021" y="440" width="1" height="4" fill="#2c2c2c"/>
<rect x="1023" y="440" width="1" height="4" fill="#2c2c2c"/>
<rect x="1025" y="440" width="1" height="4" fill="#2c2c2c"/>
<rect x="1027" y="440" width="1" height="4" fill="#2c2c2c"/>
<path d="M1020.5 93.5 C1027 93.5 1031.5 96.5 1031.5 100.5 C1031.5 103 1029.5 103.5 1028 103.2 C1026 103 1025.3 104.5 1026 106 C1026.5 107.5 1025 108.5 1021 108.5 C1014.5 108.5 1010 105.5 1010 101 C1010 96.5 1014.5 93.5 1020.5 93.5 Z" fill="#c9c9c9"/>
<circle cx="1014" cy="101" r="1.4" fill="#474747"/>
<circle cx="1017" cy="104.5" r="1.4" fill="#474747"/>
<circle cx="1021.5" cy="105" r="1.4" fill="#474747"/>
<circle cx="1016.5" cy="97.5" r="1.4" fill="#474747"/>
<circle cx="1023" cy="97" r="1.4" fill="#474747"/>
<path d="M1011.5 119.5 L1011.5 137.5 L1029.5 137.5 C1029.5 127.5 1021.5 119.5 1011.5 119.5 Z" fill="url(#sg2)" stroke="#c9c9c9" stroke-width="1.2"/>
<path d="M1012 137 L1012 126 C1018 126 1023 131 1023 137 Z" fill="#222"/>
<circle cx="1018" cy="157" r="7.5" fill="none" stroke="#c9c9c9" stroke-width="1.6"/><circle cx="1018" cy="157" r="3.5" fill="none" stroke="#c9c9c9" stroke-width="1.4"/><path d="M1019 156 L1026 148 M1019 158 L1026 164" stroke="#c9c9c9" stroke-width="1.5"/><circle cx="1027" cy="147.5" r="2.6" fill="#c9c9c9"/><circle cx="1027" cy="165" r="2.6" fill="#c9c9c9"/>
<rect x="1012" y="192" width="17" height="12" fill="#c9c9c9"/>
<rect x="1013" y="193" width="4.5" height="4.5" fill="#111"/>
<rect x="1018.5" y="193" width="4.5" height="4.5" fill="#333"/>
<rect x="1024" y="193" width="4.5" height="4.5" fill="#888"/>
<rect x="1013" y="198.5" width="4.5" height="4.5" fill="#666"/>
<rect x="1018.5" y="198.5" width="4.5" height="4.5" fill="#555"/>
<rect x="1024" y="198.5" width="4.5" height="4.5" fill="#222"/>
<rect x="1016" y="226" width="10" height="9" fill="#c9c9c9"/>
<path d="M1018 226 L1014 219 C1013 217 1015 215.5 1016.5 217 L1019.5 226 Z M1021 226 L1020.5 216 L1022.5 216 L1022.5 226 Z M1023.5 226 L1026 220 C1027 218 1029.5 219 1028.5 221 L1025 226 Z" fill="#c9c9c9"/>
<circle cx="1020.5" cy="249.5" r="4.2" fill="#c9c9c9"/><circle cx="1016" cy="255.5" r="4.2" fill="#c9c9c9"/><circle cx="1025" cy="255.5" r="4.2" fill="#c9c9c9"/><path d="M1019.5 255 L1018 261 L1015.5 262 L1025.5 262 L1023 261 L1021.5 255 Z" fill="#c9c9c9"/>
<rect x="1012" y="287.5" width="17" height="2" fill="#c9c9c9"/><rect x="1012" y="292" width="17" height="2.6" fill="#c9c9c9"/><rect x="1012" y="297.5" width="17" height="3.5" fill="#c9c9c9"/>
<rect x="1011.5" y="316.5" width="17" height="12" fill="url(#sg)" stroke="#c9c9c9" stroke-width="1.2"/>
<circle cx="1017" cy="348" r="5.8" fill="#bdbdbd"/><circle cx="1022" cy="353.5" r="5.8" fill="#5a5a5a" stroke="#c9c9c9" stroke-width="1.4"/>
<circle cx="1020" cy="391" r="7.5" fill="none" stroke="#c9c9c9" stroke-width="1.4" stroke-dasharray="1.8 1.4"/><circle cx="1020" cy="391" r="5.5" fill="#c9c9c9"/>
<path d="M1017.5 412.5 H1028.5 V425.5 H1023" fill="none" stroke="#c9c9c9" stroke-width="1.3"/><rect x="1012.5" y="418.5" width="9" height="8" fill="#474747" stroke="#c9c9c9" stroke-width="1.3"/><rect x="1015" y="421" width="4" height="3" fill="#c9c9c9"/>
<path d="M1012.5 456 V468.5 H1027.5 V462" fill="none" stroke="#c9c9c9" stroke-width="1.8"/><path d="M1018 463 L1028 453 M1022 452 H1029 V459" fill="none" stroke="#c9c9c9" stroke-width="1.8"/>
<path d="M1020 481 L1029 485.5 L1020 490 L1011 485.5 Z" fill="#c9c9c9"/><path d="M1011 489 L1020 493.5 L1029 489 L1029 491 L1020 496 L1011 491 Z" fill="#c9c9c9"/>
<rect x="1012.5" y="508.5" width="9" height="11" fill="none" stroke="#c9c9c9" stroke-width="1.3"/><rect x="1016.5" y="514.5" width="12" height="10" fill="#474747" stroke="#c9c9c9" stroke-width="1.3"/>
</svg><!-- /STRIP SVG -->
<div class="a" style="left:1038px;top:77px;width:2px;height:609px;background:#2e2e2e"></div>
<!-- LIBRARY PANEL -->
<div class="a" style="left:1040px;top:77px;width:240px;height:17px;background:#333333"></div>
<div class="a" style="left:1040px;top:77px;width:59px;height:17px;background:#474747"></div>
<div class="t" style="left:1048px;top:80px;font-size:11px;font-weight:bold;color:#ececec;letter-spacing:-0.55px">Biblioteki</div>
<svg class="a" style="left:1260px;top:81px" width="16" height="10" viewBox="0 0 16 10"><path d="M0 3 L5 3 L2.5 6Z" fill="#d8d8d8"/><rect x="6" y="1" width="9" height="1.5" fill="#d8d8d8"/><rect x="6" y="4.5" width="9" height="1.5" fill="#d8d8d8"/><rect x="6" y="8" width="9" height="1.5" fill="#d8d8d8"/></svg>
<div class="a" id="lib" style="left:1040px;top:94px;width:240px;height:592px;background:#474747"></div>
<!-- RIGHTPANEL -->
<div class="a" style="left:1048px;top:98px;width:173px;height:18px;background:#505050;border:1px solid #383838"></div>
<div class="t" style="left:1060px;top:103px;font-size:11px;font-weight:bold;color:#f4f4f4;letter-spacing:-0.24px">Moja biblioteka</div>
<div class="a" style="left:1204px;top:101px;width:1px;height:13px;background:#3a3a3a"></div>
<div class="a" style="left:1209px;top:105px;border-left:3.5px solid transparent;border-right:3.5px solid transparent;border-top:5px solid #e8e8e8"></div>
<div class="a" style="left:1228px;top:98px;width:20px;height:18px;background:#262626"></div>
<svg class="a" style="left:1231px;top:101px" width="14" height="13" viewBox="0 0 14 13"><rect x="0.5" y="0.5" width="6" height="5.5" fill="#d8d8d8"/><rect x="7.5" y="0.5" width="6" height="5.5" fill="#d8d8d8"/><rect x="0.5" y="7" width="6" height="5.5" fill="#d8d8d8"/><rect x="7.5" y="7" width="6" height="5.5" fill="#d8d8d8"/></svg>
<svg class="a" style="left:1254px;top:101px" width="13" height="13" viewBox="0 0 13 13"><rect x="0" y="0" width="13" height="2" fill="#cfcfcf"/><rect x="0" y="3.5" width="13" height="2" fill="#cfcfcf"/><rect x="0" y="7" width="13" height="2" fill="#cfcfcf"/><rect x="0" y="10.5" width="13" height="2" fill="#cfcfcf"/></svg>
<div class="a" style="left:1048px;top:122px;width:204px;height:23px;background:#a6a6a6;border:1px solid #383838"></div>
<svg class="a" style="left:1052px;top:128px" width="12" height="12" viewBox="0 0 12 12"><circle cx="5" cy="5" r="3.6" fill="none" stroke="#2f6fc0" stroke-width="1.6"/><path d="M7.5 7.5 L11 11" stroke="#2f6fc0" stroke-width="2"/></svg>
<div class="t" style="left:1066px;top:129px;font-size:10.5px;color:#6e6e6e;letter-spacing:-0.46px">Przeszukaj Adobe Stock</div>
<div class="a" style="left:1251px;top:122px;width:21px;height:23px;background:#474747;border:1px solid #383838;border-left:none"></div>
<div class="a" style="left:1258px;top:131px;border-left:4px solid transparent;border-right:4px solid transparent;border-top:5px solid #f0f0f0"></div>
<div class="a" style="left:1040px;top:150px;width:240px;height:2px;background:#383838"></div>
<div class="a" style="left:1266px;top:152px;width:14px;height:510px;background:#3c3c3c"></div>
<svg class="a" style="left:1100px;top:278px" width="108" height="108" viewBox="0 0 108 108"><circle cx="53.5" cy="53.5" r="46.5" fill="none" stroke="#7c7c7c" stroke-width="1.9" stroke-dasharray="6 4.2"/><path d="M53.5 46 V61 M46 53.5 H61" stroke="#707070" stroke-width="2.4"/></svg>
<div class="t" style="left:1072px;top:399px;font-size:14px;color:#e2e2e2;letter-spacing:-0.18px">Przeciągnij i upuść zasoby</div>
<div class="t" style="left:1066px;top:427px;font-size:11px;color:#919191;letter-spacing:-0.07px">Przeciągnij i upuść dowolny element</div>
<div class="t" style="left:1061px;top:442px;font-size:11px;color:#919191;letter-spacing:0.02px">w dokumencie, aby dodać grafikę, lub</div>
<div class="t" style="left:1076px;top:457.5px;font-size:11px;color:#919191;letter-spacing:-0.07px">użyj poniższych przycisków, aby</div>
<div class="t" style="left:1070px;top:472.5px;font-size:11px;color:#919191;letter-spacing:0.01px">dodać kolory, style znakowe i inne</div>
<div class="t" style="left:1130px;top:488px;font-size:11px;color:#919191;letter-spacing:0.06px">elementy.</div>
<svg class="a" style="left:1143px;top:509px" width="20" height="20" viewBox="0 0 20 20"><circle cx="10" cy="10" r="8" fill="none" stroke="#8e8e8e" stroke-width="1.6"/><path d="M7.3 7.5 C7.3 5.5 8.5 4.8 10 4.8 C11.7 4.8 12.8 5.8 12.8 7.2 C12.8 8.8 10.2 9.3 10.2 11.3" fill="none" stroke="#8e8e8e" stroke-width="1.7"/><circle cx="10.2" cy="14.2" r="1.1" fill="#8e8e8e"/></svg>
<!-- bottom bar -->
<div class="a" style="left:1040px;top:662px;width:240px;height:24px;background:#484848;border-top:1px solid #383838"></div>
<svg class="a" style="left:1048px;top:665px" width="20" height="18" viewBox="0 0 20 18"><path d="M1 14 L14 3 L14 14 Z" fill="none" stroke="#8a8a8a" stroke-width="1.3"/><circle cx="10" cy="14" r="2.8" fill="#484848" stroke="#8a8a8a" stroke-width="1.3"/><rect x="13" y="9" width="5" height="6" fill="#8a8a8a"/></svg>
<div class="t" style="left:1076px;top:666px;font-size:16px;color:#8e8e8e">A</div>
<div class="t" style="left:1100px;top:667px;font-size:14px;font-weight:bold;color:#7a7a7a">¶</div>
<div class="a" style="left:1123px;top:666px;width:15px;height:15px;background:#fff"></div>
<div class="a" style="left:1146px;top:666px;width:15px;height:15px;background:#231f20;border:1px solid #d8d8d8"></div>
<svg class="a" style="left:1219px;top:666px" width="20" height="14" viewBox="0 0 20 14"><ellipse cx="7" cy="7" rx="5.5" ry="5" fill="none" stroke="#dcdcdc" stroke-width="1.8"/><ellipse cx="13" cy="7" rx="5.5" ry="5" fill="none" stroke="#dcdcdc" stroke-width="1.8"/></svg>
<svg class="a" style="left:1246px;top:665px" width="13" height="16" viewBox="0 0 13 16"><rect x="0" y="2" width="13" height="2" fill="#6e6e6e"/><rect x="4" y="0" width="5" height="2" fill="#6e6e6e"/><path d="M1.5 5 H11.5 L10.5 15.5 H2.5 Z" fill="#6e6e6e"/><path d="M4.5 6 V14 M6.5 6 V14 M8.5 6 V14" stroke="#484848" stroke-width="0.8"/></svg>
<!-- /RIGHTPANEL -->
</body></html>
